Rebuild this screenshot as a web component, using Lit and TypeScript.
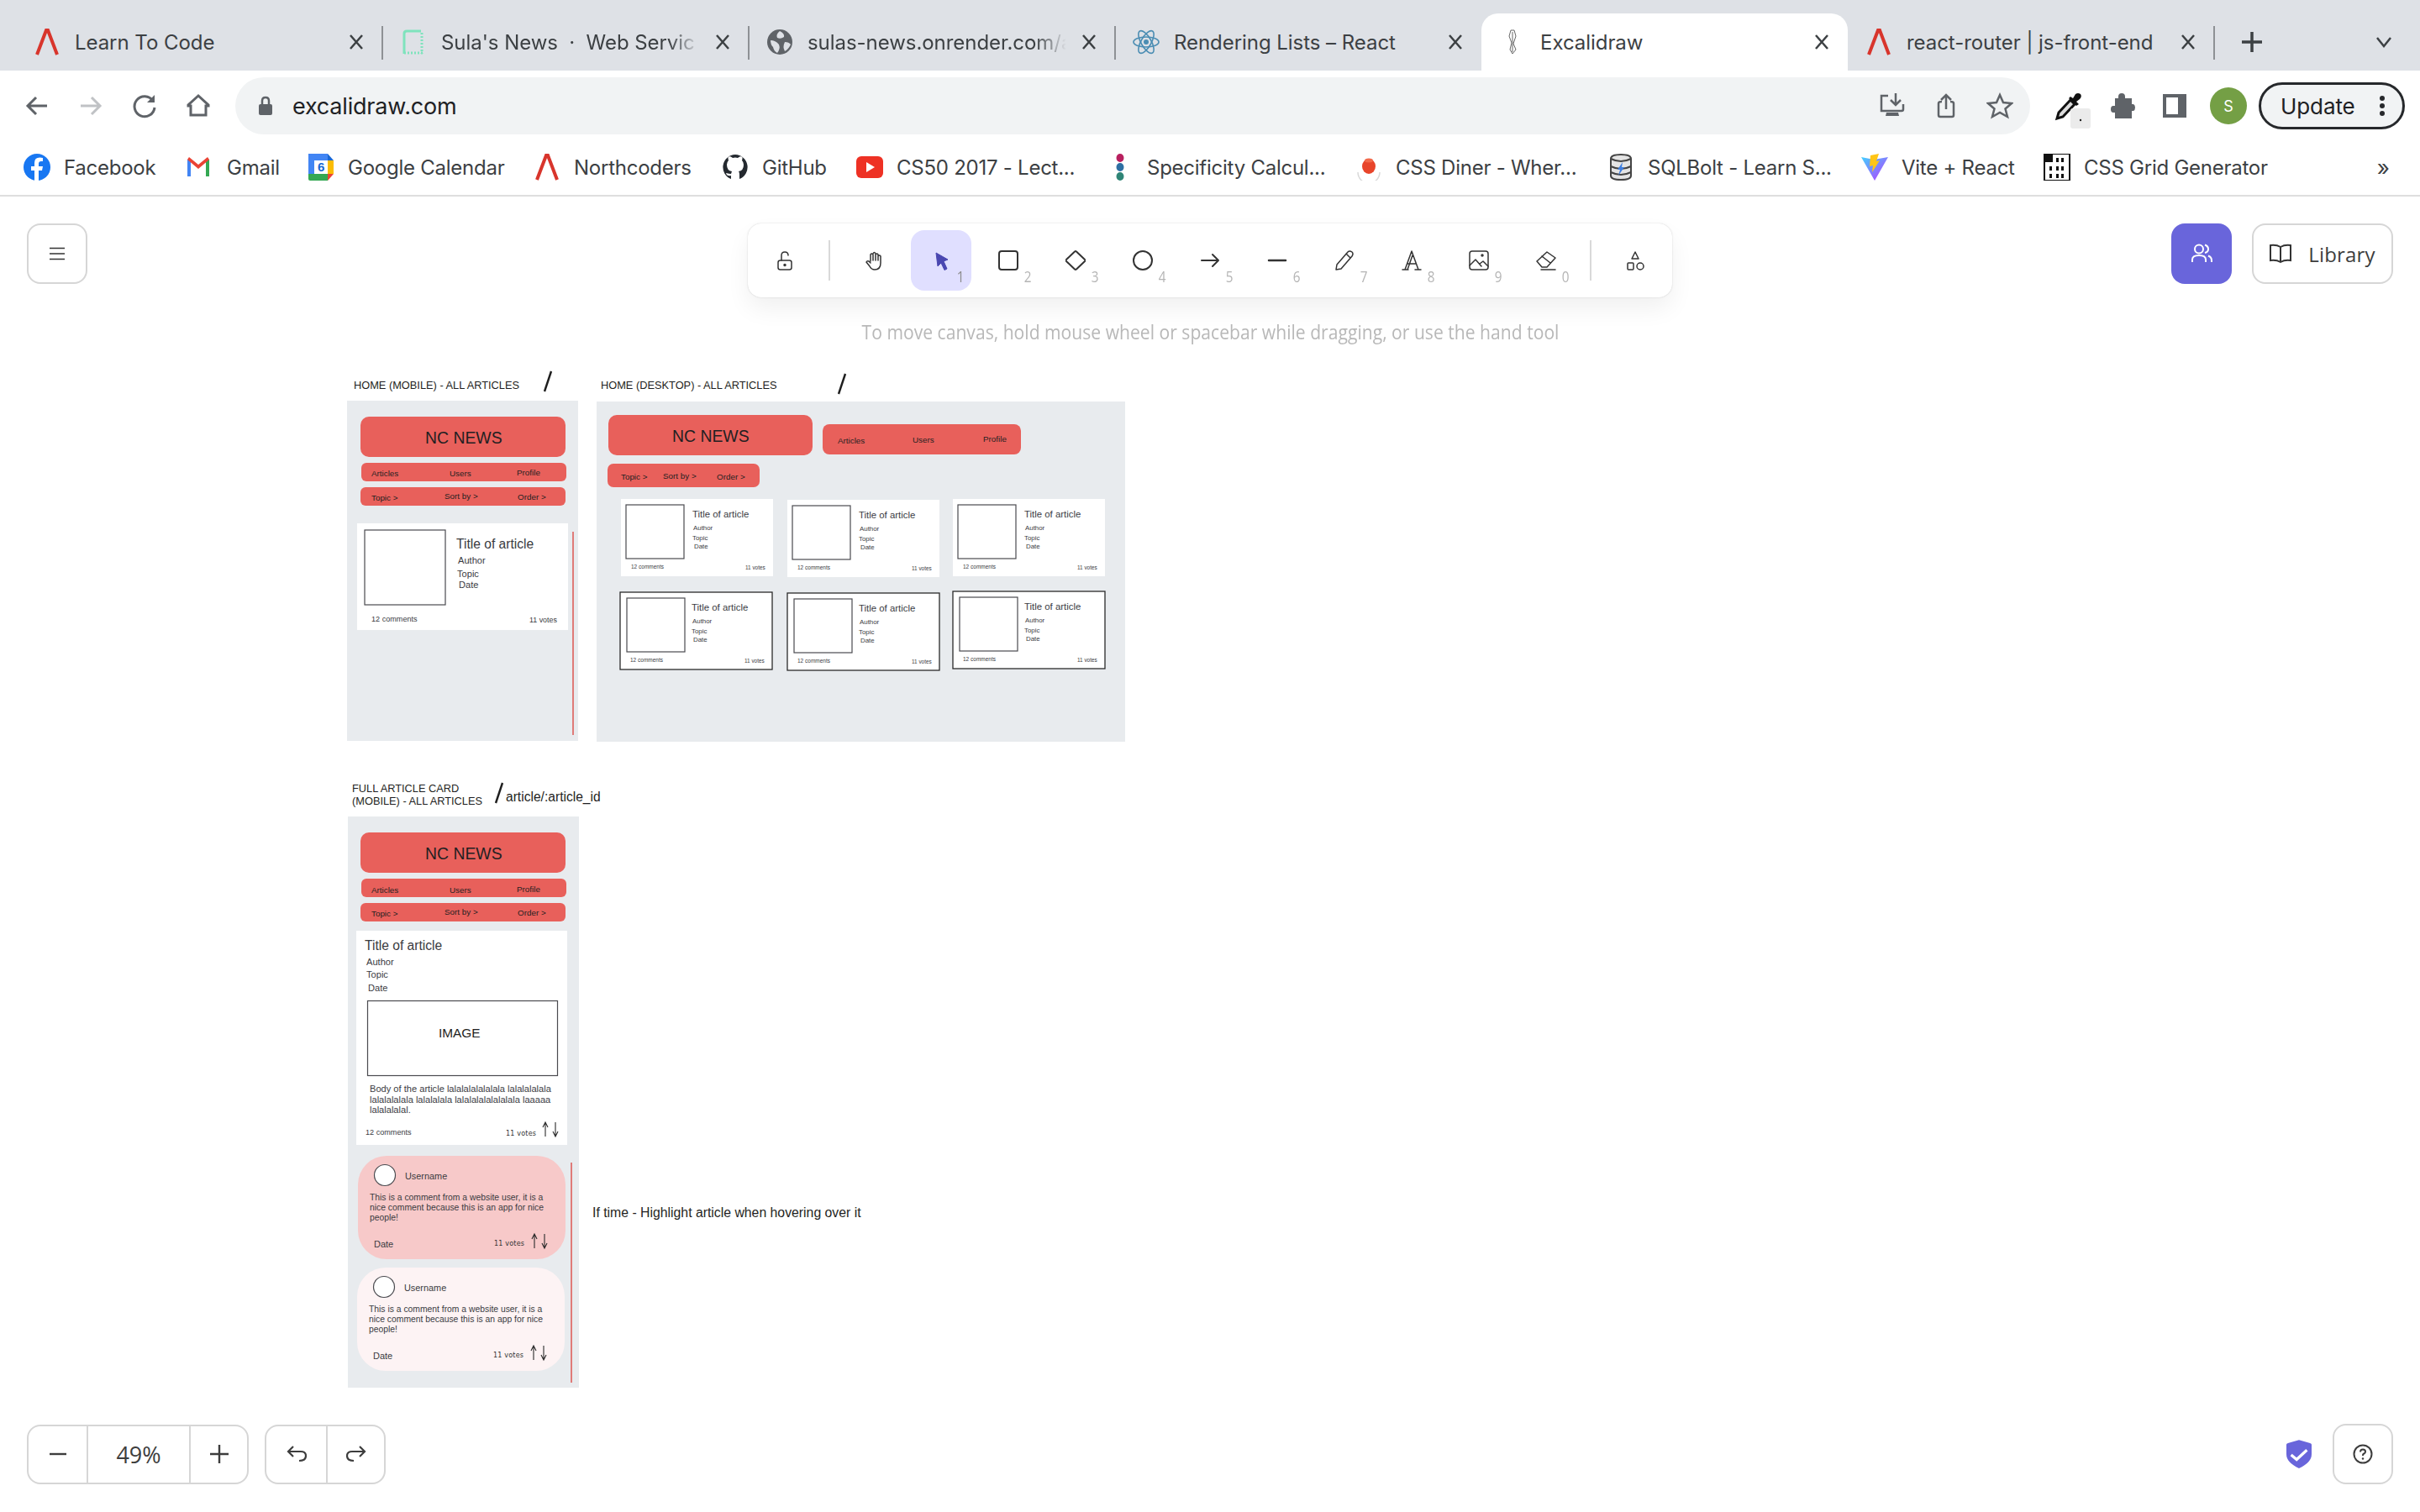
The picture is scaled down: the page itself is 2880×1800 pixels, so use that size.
import { LitElement, html, svg, css } from "lit";
import { customElement } from "lit/decorators.js";

const lambda = (w = 4) => svg`<path d="M4 31 L15 2 H17 L28 31" fill="none" stroke="#d8352c" stroke-width="${w}"/>`;

const icon = (body: unknown, size = 32, vb = 32) =>
  html`<svg class="ic" width="${size}" height="${size}" viewBox="0 0 ${vb} ${vb}">${body}</svg>`;

const favicons: Record<string, unknown> = {
  nc: lambda(),
  render: svg`<path d="M5 30 V6 Q5 3 8 3 H25" fill="none" stroke="#7fe3bd" stroke-width="3"/><path d="M26 5 V30 M5 29 H28" fill="none" stroke="#7fe3bd" stroke-width="3" stroke-dasharray="2 2"/>`,
  globe: svg`<circle cx="16" cy="16" r="15" fill="#5f6368"/><path d="M16 3 Q22 6 21 10 Q17 13 13 11 Q11 7 16 3 Z M5 14 Q11 14 15 19 Q17 24 13 29 Q9 27 8 22 Q5 19 5 14 Z M22 16 Q27 16 29 19 Q26 25 22 27 Q19 22 22 16Z" fill="#dee1e6"/>`,
  react: svg`<g fill="none" stroke="#4b8db3" stroke-width="1.6"><ellipse cx="16" cy="16" rx="15" ry="6"/><ellipse cx="16" cy="16" rx="15" ry="6" transform="rotate(60 16 16)"/><ellipse cx="16" cy="16" rx="15" ry="6" transform="rotate(120 16 16)"/></g><circle cx="16" cy="16" r="3" fill="#4b8db3"/>`,
  clip: svg`<path d="M14 2 L18 2 L20 9 L17 18 L20 25 L16 30 L13 25 L15 17 L12 9 Z M16 4 V28" fill="none" stroke="#666" stroke-width="1"/>`,
  fb: svg`<circle cx="16" cy="16" r="16" fill="#1877f2"/><path d="M18 32 V20 H22 L23 15 H18 V12 Q18 9 21 9 H23 V5 Q13 3 13 11 V15 H9 V20 H13 V32 Z" fill="#fff"/>`,
  gmail: svg`<g transform="translate(-2 0)"><path d="M3 27 V7 L7 6 V27 Z" fill="#4285f4"/><path d="M25 27 V6 L29 7 V27 Z" fill="#34a853"/><path d="M3 7 L16 18 L29 7 L27 4 L16 13 L5 4 Z" fill="#ea4335"/></g>`,
  cal: svg`<rect x="1" y="0" width="30" height="32" rx="2" fill="#fff"/><path d="M1 0 H24 V8 H8 V24 H1 Z" fill="#4285f4"/><path d="M24 0 L31 8 H24Z" fill="#1967d2"/><path d="M24 8 H31 V24 H24 Z" fill="#fbbc04"/><path d="M1 24 H24 V32 H3 Q1 32 1 30 Z" fill="#34a853"/><path d="M24 24 H31 L24 32 Z" fill="#ea4335"/><text x="16" y="21" class="cal6">6</text>`,
  gh: svg`<path d="M16 1 A15 15 0 0 0 11 30 V26 Q6 27 5 23 Q9 24 11 24 L12 21 Q6 20 6 13 Q6 10 8 8 Q7 5 8 3 Q11 3 13 5 Q16 4 19 5 Q21 3 24 3 Q25 5 24 8 Q26 10 26 13 Q26 20 20 21 Q21 22 21 25 V30 A15 15 0 0 0 16 1Z" fill="#24292f"/>`,
  yt: svg`<rect x="0" y="3" width="32" height="26" rx="6" fill="#ee3124"/><path d="M12 10 L22 16 L12 22Z" fill="#fff"/>`,
  spec: svg`<ellipse cx="16" cy="5" rx="4.500" ry="5" fill="#b8205f"/><ellipse cx="16" cy="16" rx="4.500" ry="5" fill="#2d6fa3"/><ellipse cx="16" cy="27" rx="4.500" ry="5" fill="#2f8576"/>`,
  diner: svg`<path d="M3 22 A13 13 0 0 0 29 22" fill="none" stroke="#d9d9d9" stroke-width="1.500"/><ellipse cx="16" cy="15" rx="8" ry="9" fill="#e8452a"/><ellipse cx="16" cy="8" rx="5" ry="2.500" fill="#f26a4b"/>`,
  sql: svg`<path d="M4 6 Q4 1 16 1 Q28 1 28 6 V26 Q28 31 16 31 Q4 31 4 26 Z" fill="#e4e4e4" stroke="#444" stroke-width="2"/><path d="M4 6 Q16 12 28 6 M4 15 Q16 21 28 15 M4 22 Q16 28 28 22" fill="none" stroke="#444" stroke-width="2"/><path d="M18 10 L12 19 H15 L13 26 L20 16 H17 Z" fill="#3f7fe0"/>`,
  vite: svg`<defs><linearGradient id="vg" x1="0" y1="0" x2="1" y2="1"><stop offset="0" stop-color="#41d1ff"/><stop offset="1" stop-color="#bd34fe"/></linearGradient></defs><path d="M0 4 L15 7 L32 4 L16 32 Z" fill="url(#vg)"/><path d="M21 0 L11 2 L10 15 L14 14 L13 22 L22 8 L18 9 Z" fill="#ffc517"/>`,
  grid: svg`<rect x="1" y="0" width="30" height="32" fill="#fff" stroke="#111" stroke-width="2"/><rect x="1" y="0" width="10" height="10" fill="#111"/><path d="M15 5 H18 V10 H15Z M21 5 H24 V10 H21Z M7 15 H10 V20 H7Z M15 15 H18 V20 H15Z M21 15 H24 V20 H21Z M7 24 H10 V29 H7Z M15 24 H18 V29 H15Z M21 24 H24 V29 H21Z" fill="#111"/>`,
};

const tabs = [
  { t: "Learn To Code", f: "nc", fade: false },
  { t: "Sula's News \u00a0·\u00a0 Web Servic", f: "render", fade: true },
  { t: "sulas-news.onrender.com/a", f: "globe", fade: true },
  { t: "Rendering Lists – React", f: "react", fade: false },
  { t: "Excalidraw", f: "clip", fade: false, active: true },
  { t: "react-router | js-front-end", f: "nc", fade: false },
];

const bookmarks = [
  { t: "Facebook", f: "fb", w: 194 },
  { t: "Gmail", f: "gmail", w: 144 },
  { t: "Google Calendar", f: "cal", w: 269 },
  { t: "Northcoders", f: "nc", w: 224 },
  { t: "GitHub", f: "gh", w: 160 },
  { t: "CS50 2017 - Lect...", f: "yt", w: 298 },
  { t: "Specificity Calcul...", f: "spec", w: 296 },
  { t: "CSS Diner - Wher...", f: "diner", w: 300 },
  { t: "SQLBolt - Learn S...", f: "sql", w: 302 },
  { t: "Vite + React", f: "vite", w: 217 },
  { t: "CSS Grid Generator", f: "grid", w: 320 },
];

const stroke = (d: unknown, w = 2) =>
  svg`<g fill="none" stroke="#333" stroke-width="${w}" stroke-linecap="round" stroke-linejoin="round">${d}</g>`;

const tools: { k: string; n?: string; body: unknown; active?: boolean; sep?: boolean }[] = [
  { k: "lock", body: stroke(svg`<rect x="4" y="12" width="16" height="11" rx="2.500"/><path d="M8 12 V6 Q8 2 12 2 Q16 2 16 6"/><circle cx="12" cy="17.500" r="1"/>`, 1.5), sep: true },
  { k: "hand", body: stroke(svg`<path d="M8 13 V5 Q9.500 3 11 5 V12 M11 4 Q12.500 1 14 4 V12 M14 5 Q15.500 3 17 5 V12 M17 7 Q18.500 5 20 7 V15 Q20 23 13 23 Q9 23 7 19 L3 14 Q4 12 6 13 L8 15"/>`, 1.5) },
  { k: "select", n: "1", active: true, body: svg`<path d="M6 3 L20 11 L15 13 L19 22 L16 23.500 L12 15 L8 19 Z" fill="#4a47b1" stroke="#4a47b1" stroke-width="1"/>` },
  { k: "rect", n: "2", body: stroke(svg`<rect x="1" y="1" width="22" height="22" rx="3"/>`) },
  { k: "diamond", n: "3", body: stroke(svg`<path d="M11 1.500 Q12 .5 13 1.500 L23 11 Q24 12 23 13 L13 22.500 Q12 23.500 11 22.500 L1 13 Q0 12 1 11 Z"/>`) },
  { k: "circle", n: "4", body: stroke(svg`<circle cx="12" cy="12" r="11"/>`) },
  { k: "arrow", n: "5", body: stroke(svg`<path d="M2 12 H22 M15 5 L22 12 L15 19"/>`) },
  { k: "line", n: "6", body: stroke(svg`<path d="M2 12 H22"/>`, 2.5) },
  { k: "pencil", n: "7", body: stroke(svg`<path d="M3 17 L16 2 Q18 0 21 2 Q23 4 21 7 L8 22 L2 23 Z M14 4 L19 9"/>`, 1.5) },
  { k: "text", n: "8", body: stroke(svg`<path d="M1 23 H8 M16 23 H23 M4 23 L12 1 L20 23 M7 23 L13 6 M7 16 H17"/>`, 1.5) },
  { k: "image", n: "9", body: stroke(svg`<rect x="1" y="1" width="22" height="22" rx="3"/><path d="M1 18 L8 11 L15 19 M13 16 L17 13 L23 19"/><circle cx="16" cy="6" r="1"/>`, 1.5) },
  { k: "eraser", n: "0", body: stroke(svg`<path d="M7 20 L1 13 L13 2 L23 9 L13 20 Z M7 7 L17 15 M6 23 H23"/>`, 1.5), sep: true },
  { k: "shapes", body: stroke(svg`<path d="M12 2 L16 10 H8 Z"/><rect x="3" y="15" width="7" height="8" rx="1"/><circle cx="18" cy="19" r="4"/>`, 1.5) },
];

/* ---- drawing on the free canvas; coordinates are page-y minus the chrome height ---- */
const Y0 = 234;
const t = (x: number, y: number, s: string, size: number, cls = "") =>
  svg`<text x="${x}" y="${y - Y0}" font-size="${size}" class="${cls}">${s}</text>`;
const rect = (x: number, y: number, w: number, h: number, cls: string, r = 0) =>
  svg`<rect x="${x}" y="${y - Y0}" width="${w}" height="${h}" rx="${r}" class="${cls}"/>`;
const slash = (x: number, y: number) =>
  svg`<path d="M${x + 9} ${y - Y0} L${x + 1} ${y + 24 - Y0}" class="slash"/>`;
const arrows = (x: number, y: number) => svg`
  <path d="M${x} ${y + 17 - Y0} V${y - Y0} M${x - 3} ${y + 6 - Y0} L${x} ${y - Y0} L${x + 3} ${y + 6 - Y0}" class="arr"/>
  <path d="M${x + 12} ${y - Y0} V${y + 17 - Y0} M${x + 9} ${y + 11 - Y0} L${x + 12} ${y + 17 - Y0} L${x + 15} ${y + 11 - Y0}" class="arr"/>`;

const mobileHeader = (x: number, y: number, a: number) => svg`
  ${rect(x + 16, y + 19, 244, 48, "red", 10)}
  ${t(x + 93, y + 51, "NC NEWS", 19.4, "ink")}
  ${rect(x + 17, y + 74, 244, 22, "red", 6)}
  ${t(x + 29, y + 90 + a, "Articles", 9.85, "ink")}
  ${t(x + 122, y + 90 + a, "Users", 9.85, "ink")}
  ${t(x + 202, y + 89 + a, "Profile", 9.85, "ink")}
  ${rect(x + 16, y + 103, 244, 22, "red", 6)}
  ${t(x + 29, y + 119, "Topic >", 9.85, "ink")}
  ${t(x + 116, y + 117, "Sort by >", 9.85, "ink")}
  ${t(x + 203, y + 118, "Order >", 9.85, "ink")}`;

const smallCard = (x: number, y: number, b: boolean) => svg`
  ${rect(x, y, 181, 92, b ? "card outlined" : "card")}
  ${rect(x + (b ? 8 : 6), y + 7, 69, 64, "pic")}
  ${t(x + 85, y + 22, "Title of article", 11.4, "ink2")}
  ${t(x + 86, y + 37, "Author", 7.9, "ink2")}
  ${t(x + 85, y + 49, "Topic", 7.9, "ink2")}
  ${t(x + 87, y + 59, "Date", 7.9, "ink2")}
  ${t(x + 12, y + 83, "12 comments", 6.5, "ink2")}
  ${t(x + 148, y + 84, "11 votes", 6.4, "ink2")}`;

const comment = (x: number, y: number, fill: string) => svg`
  ${rect(x, y, 247, 123, fill, 34)}
  <circle cx="${x + 32}" cy="${y + 23 - Y0}" r="12.500" class="pic"/>
  ${t(x + 56, y + 28, "Username", 10.9, "ink2")}
  ${t(x + 14, y + 53, "This is a comment from a website user, it is a", 10.35, "ink2")}
  ${t(x + 14, y + 65, "nice comment because this is an app for nice", 10.35, "ink2")}
  ${t(x + 14, y + 77, "people!", 10.35, "ink2")}
  ${t(x + 19, y + 109, "Date", 11, "ink2")}
  ${t(x + 162, y + 107, "11 votes", 8, "hand")}
  ${arrows(x + 210, y + 93)}`;

const drawing = svg`
  <!-- home, mobile -->
  ${t(421, 463, "HOME (MOBILE) - ALL ARTICLES", 12.8, "ink")}
  ${slash(647, 442)}
  ${rect(413, 477, 275, 405, "frame")}
  ${mobileHeader(413, 477, 0)}
  ${rect(425, 623, 251, 127, "card")}
  ${rect(434, 631, 96, 89, "pic")}
  ${t(543, 653, "Title of article", 15.6, "ink2")}
  ${t(545, 671, "Author", 11.1, "ink2")}
  ${t(544, 687, "Topic", 11.1, "ink2")}
  ${t(546, 700, "Date", 11.1, "ink2")}
  ${t(442, 740, "12 comments", 9.1, "ink2")}
  ${t(630, 741, "11 votes", 8.9, "ink2")}
  <path d="M682 ${633 - Y0} V${875 - Y0}" class="rule"/>

  <!-- home, desktop -->
  ${t(715, 463, "HOME (DESKTOP) - ALL ARTICLES", 12.8, "ink")}
  ${slash(997, 445)}
  ${rect(710, 478, 629, 405, "frame")}
  ${rect(724, 494, 243, 48, "red", 10)}
  ${t(800, 526, "NC NEWS", 19.4, "ink")}
  ${rect(979, 505, 236, 36, "red", 8)}
  ${t(997, 528, "Articles", 9.85, "ink")}
  ${t(1086, 527, "Users", 9.85, "ink")}
  ${t(1170, 526, "Profile", 9.85, "ink")}
  ${rect(723, 552, 181, 28, "red", 7)}
  ${t(739, 571, "Topic >", 9.85, "ink")}
  ${t(789, 570, "Sort by >", 9.85, "ink")}
  ${t(853, 571, "Order >", 9.85, "ink")}
  ${smallCard(739, 594, false)}
  ${smallCard(937, 595, false)}
  ${smallCard(1134, 594, false)}
  ${smallCard(738, 705, true)}
  ${smallCard(937, 706, true)}
  ${smallCard(1134, 704, true)}

  <!-- full article, mobile -->
  ${t(419, 943, "FULL ARTICLE CARD", 12.8, "ink")}
  ${t(419, 958, "(MOBILE) - ALL ARTICLES", 12.8, "ink")}
  ${slash(589, 932)}
  ${t(602, 954, "article/:article_id", 15.6, "ink")}
  ${rect(414, 972, 275, 680, "frame")}
  ${mobileHeader(413, 972, 1)}
  ${rect(424, 1108, 251, 255, "card")}
  ${t(434, 1131, "Title of article", 15.6, "ink2")}
  ${t(436, 1149, "Author", 11.1, "ink2")}
  ${t(436, 1164, "Topic", 11.1, "ink2")}
  ${t(438, 1180, "Date", 11.1, "ink2")}
  ${rect(437.5, 1191.5, 226, 89, "pic")}
  ${t(522, 1235, "IMAGE", 15.4, "ink")}
  ${t(440, 1300, "Body of the article lalalalalalalala lalalalalala", 11.1, "ink2")}
  ${t(440, 1313, "lalalalalala lalalalala lalalalalalalalala laaaaa", 11.1, "ink2")}
  ${t(440, 1325, "lalalalalal.", 11.1, "ink2")}
  ${t(435, 1351, "12 comments", 9.1, "ink2")}
  ${t(602, 1352, "11 votes", 8, "hand")}
  ${arrows(649, 1336)}
  ${comment(426, 1376, "pink")}
  ${comment(425, 1509, "blush")}
  <path d="M680 ${1384 - Y0} V${1646 - Y0}" class="rule"/>
  ${t(705, 1449, "If time - Highlight article when hovering over it", 15.8, "ink")}
`;

@customElement("app-root")
export class AppRoot extends LitElement {
  static styles = css`
    :host { display: flex; flex-direction: column; width: 2880px; height: 1800px; background: #fff; overflow: hidden;
      font-family: Inter, "Liberation Sans", Arial, sans-serif; color: #3c4043; }
    .ic { display: block; flex: none; }
    .cal6 { font: bold 15px "Liberation Sans", sans-serif; fill: #1967d2; text-anchor: middle; }

    /* tab strip */
    .tabs { display: flex; align-items: flex-end; height: 84px; padding-left: 19px; background: #dee1e6; flex: none; }
    .tab { position: relative; display: flex; align-items: center; width: 436px; height: 68px; box-sizing: border-box;
      padding: 0 21px 0 21px; gap: 17px; font-size: 24px; letter-spacing: -.05px; }
    .tab.sep::after { content: ""; position: absolute; right: -1px; top: 15px; width: 2px; height: 40px; background: #8e9195; }
    .tab.active { background: #fff; border-radius: 20px 20px 0 0; }
    .tab-t { flex: 1; white-space: nowrap; overflow: hidden; }
    .tab-t.fade { -webkit-mask-image: linear-gradient(90deg, #000 88%, transparent 100%); mask-image: linear-gradient(90deg, #000 88%, transparent 100%); }
    .x { flex: none; width: 20px; height: 20px; }
    .x path { stroke: #3c4043; stroke-width: 2.500; fill: none; }
    .strip-end { flex: 1; display: flex; align-items: center; height: 68px; padding: 0 33px 0 31px; justify-content: space-between; }

    /* address row */
    .bar { display: flex; align-items: center; height: 84px; flex: none; padding-left: 28px; box-sizing: border-box; }
    .nav { display: flex; gap: 32px; margin-right: 28px; }
    .omni { display: flex; align-items: center; flex: none; width: 2136px; height: 68px; border-radius: 34px; background: #f1f3f4;
      box-sizing: border-box; padding: 0 20px 0 27px; gap: 23px; font-size: 27px; letter-spacing: -.2px; color: #202124; }
    .omni-t { flex: 1; }
    .omni-icons { display: flex; gap: 32px; }
    .ext { display: flex; align-items: center; gap: 31px; margin-left: 30px; }
    .picker { overflow: visible; }
    .avatar { width: 44px; height: 44px; border-radius: 50%; background: #749f45; color: #fff; font-size: 18px;
      display: flex; align-items: center; justify-content: center; flex: none; margin-left: -5px; }
    .update { display: flex; align-items: center; justify-content: space-between; width: 174px; height: 56px; box-sizing: border-box;
      border: 3px solid #26282b; border-radius: 28px; background: #f1f3f4; padding: 0 20px 0 23px; font-size: 26px; letter-spacing: -.1px; color: #202124; margin-left: -17px; }

    /* bookmarks */
    .marks { display: flex; align-items: center; height: 66px; flex: none; padding: 0 28px 2px; box-sizing: border-box; border-bottom: 2px solid #dedede; }
    .mark { display: flex; align-items: center; gap: 16px; font-size: 24px; letter-spacing: -.25px; white-space: nowrap; flex: none; }
    .more { margin-left: auto; font-size: 26px; margin-right: 8px; }

    /* excalidraw */
    main { position: relative; flex: 1; }
    .canvas { position: absolute; inset: 0; display: block; font-family: "Liberation Sans", Arial, sans-serif; }
    .frame { fill: #e8ebee; }
    .red { fill: #e8605b; }
    .card { fill: #fff; }
    .outlined { stroke: #2a2a2a; stroke-width: 1.3; }
    .pic { fill: #fff; stroke: #4a4a4f; stroke-width: 1.2; }
    .pink { fill: #f7c9c9; }
    .blush { fill: #fdf3f4; }
    .ink { fill: #1f1f22; }
    .ink2 { fill: #3a3b3f; }
    .hand { fill: #333; font-family: "DejaVu Sans", sans-serif; letter-spacing: .2px; }
    .slash { stroke: #1e1e1e; stroke-width: 2.4; fill: none; }
    .arr { stroke: #2a2a2a; stroke-width: 1.1; fill: none; }
    .rule { stroke: #dd5f5b; stroke-width: 1.6; fill: none; }

    .ui { position: absolute; inset: 0; display: flex; flex-direction: column; justify-content: space-between; padding: 32px 32px 33px; box-sizing: border-box; }
    .top { display: flex; justify-content: space-between; align-items: flex-start; }
    .mid { display: flex; flex-direction: column; align-items: center; }
    .side { display: flex; gap: 24px; width: 264px; justify-content: flex-end; }
    .side.l { justify-content: flex-start; }
    .btn { display: flex; align-items: center; justify-content: center; width: 72px; height: 72px; box-sizing: border-box;
      border: 2px solid #d6d6d6; border-radius: 16px; background: #fff; flex: none; }
    .collab { background: #6965db; border: 0; }
    .lib { width: 168px; gap: 20px; font: 24px "Open Sans", sans-serif; letter-spacing: .2px; color: #3d3d3d; }
    .toolbar { display: flex; align-items: center; gap: 8px; width: 1100px; height: 88px; box-sizing: border-box; padding: 0 8px;
      background: #fff; border-radius: 16px; box-shadow: 0 0 1px rgba(0,0,0,.17), 0 0 3px rgba(0,0,0,.08), 0 14px 28px rgba(0,0,0,.06); }
    .tool { position: relative; display: flex; align-items: center; justify-content: center; width: 72px; height: 72px; border-radius: 16px; flex: none; }
    .tool.active { background: #e0dfff; }
    .key { position: absolute; right: 8px; bottom: 5px; font: 18px "Open Sans", sans-serif; transform: scaleX(.85); color: #b5b5b5; }
    .tool.active .key { color: #8a8a8a; }
    .div { width: 2px; height: 48px; background: #d9d9d9; margin: 0 8px; flex: none; }
    .hint { margin-top: 24px; font: 24px "Open Sans", sans-serif; color: #b8b8b8; transform: scaleX(.88); white-space: nowrap; }
    .bottom { display: flex; align-items: center; }
    .group { display: flex; height: 71px; box-sizing: border-box; border: 2px solid #d6d6d6; border-radius: 16px; background: #fff; flex: none; }
    .cell { display: flex; align-items: center; justify-content: center; box-sizing: border-box; width: 69px; font: 27px "Open Sans", sans-serif; color: #3d3d3d; }
    .cell + .cell { border-left: 2px solid #d6d6d6; }
    .cell.pct { width: 122px; }
    .cell.u { width: 71px; }
    .cell.v { width: 69px; }
    .history { margin-left: 19px; }
    .shield { margin-left: auto; margin-right: 25px; }
  `;

  private tabX = html`<svg class="x" viewBox="0 0 20 20"><path d="M3 2 L17 18 M17 2 L3 18"/></svg>`;

  render() {
    return html`
      <div class="tabs">
        ${tabs.map((tb, i) => html`
          <div class="tab ${tb.active ? "active" : ""} ${(!tb.active && tabs[i + 1] && !tabs[i + 1].active) || i === 5 ? "sep" : ""}">
            ${icon(favicons[tb.f])}
            <span class="tab-t ${tb.fade ? "fade" : ""}">${tb.t}</span>
            ${this.tabX}
          </div>`)}
        <div class="strip-end">
          <svg class="ic" width="28" height="28" viewBox="0 0 28 28"><path d="M14 2 V26 M2 14 H26" stroke="#3c4043" stroke-width="3.500"/></svg>
          <svg class="ic" width="20" height="14" viewBox="0 0 20 14"><path d="M2 2 L10 12 L18 2" fill="none" stroke="#3c4043" stroke-width="2.500"/></svg>
        </div>
      </div>

      <div class="bar">
        <div class="nav">
          ${icon(svg`<path d="M28 16 H6 M15 6 L5 16 L15 26" fill="none" stroke="#5f6368" stroke-width="3"/>`)}
          ${icon(svg`<path d="M4 16 H26 M17 6 L27 16 L17 26" fill="none" stroke="#c0c2c5" stroke-width="3"/>`)}
          ${icon(svg`<path d="M26 10 A12 12 0 1 0 28 18" fill="none" stroke="#5f6368" stroke-width="3"/><path d="M28 3 V12 H19 Z" fill="#5f6368"/>`)}
          ${icon(svg`<path d="M16 4 L4 15 V16 H7 V27 H25 V16 H28 V15 Z" fill="none" stroke="#5f6368" stroke-width="3"/>`)}
        </div>
        <div class="omni">
          <svg class="ic" width="18" height="24" viewBox="0 0 18 24"><rect x="1" y="10" width="16" height="13" rx="2" fill="#5f6368"/><path d="M5 10 V6 Q5 2 9 2 Q13 2 13 6 V10" fill="none" stroke="#5f6368" stroke-width="2.500"/></svg>
          <span class="omni-t">excalidraw.com</span>
          <div class="omni-icons">
            ${icon(svg`<path d="M11 4 H3 V22 H27 Q29 22 29 20 V14" fill="none" stroke="#5f6368" stroke-width="2.500"/><path d="M20 1 V14 M14 9 L20 15 L26 9" fill="none" stroke="#5f6368" stroke-width="2.500"/><path d="M9 24 H23 L24 28 H8 Z" fill="#5f6368"/>`)}
            ${icon(svg`<path d="M11 11 Q7 11 7 13 V27 Q7 29 9 29 H23 Q25 29 25 27 V13 Q25 11 21 11 M16 20 V3 M10 9 L16 3 L22 9" fill="none" stroke="#5f6368" stroke-width="2.500"/>`)}
            ${icon(svg`<path d="M16 3 L20 12 L30 13 L22.500 19.500 L25 29 L16 24 L7 29 L9.500 19.500 L2 13 L12 12 Z" fill="none" stroke="#5f6368" stroke-width="2.500"/>`)}
          </div>
        </div>
        <div class="ext">
          <svg class="ic picker" width="32" height="32" viewBox="0 0 32 32">
            <path d="M21 7 L24 2 Q27 0 30 2 Q32 5 29 8 L25 11 L28 14 L25 16 L16 7 L18 5 Z" fill="#111"/>
            <path d="M18 9 L4 24 L2 31 L9 29 L23 14 Z" fill="#ddd" stroke="#111" stroke-width="3"/>
            <rect x="18" y="19" width="24" height="24" rx="3" fill="#ebebeb"/>
            <circle cx="30" cy="33" r="1.200" fill="#222"/>
          </svg>
          ${icon(svg`<path d="M12 5 Q12 1 16 1 Q20 1 20 5 V7 H28 V14 H30 Q32 15 32 18 Q32 21 30 22 H28 V31 H8 V24 H6 Q3 24 3 20 Q3 16 6 16 H8 V7 H12 Z" fill="#5f6368"/>`)}
          ${icon(svg`<rect x="2" y="2" width="28" height="28" fill="#5f6368"/><rect x="6" y="6" width="14" height="20" fill="#fff"/>`)}
          <div class="avatar">S</div>
          <div class="update"><span>Update</span>
            <svg class="ic" width="8" height="24" viewBox="0 0 8 24"><circle cx="4" cy="3" r="3" fill="#26282b"/><circle cx="4" cy="12" r="3" fill="#26282b"/><circle cx="4" cy="21" r="3" fill="#26282b"/></svg>
          </div>
        </div>
      </div>

      <div class="marks">
        ${bookmarks.map(b => html`<div class="mark" style="width:${b.w}px">${icon(favicons[b.f])}<span>${b.t}</span></div>`)}
        <span class="more">»</span>
      </div>

      <main>
        <svg class="canvas" width="2880" height="1566" viewBox="0 0 2880 1566">${drawing}</svg>
        <div class="ui">
          <div class="top">
            <div class="side l">
              <div class="btn">
                <svg class="ic" width="24" height="24" viewBox="0 0 24 24"><path d="M3 5.500 H21 M3 12 H21 M3 18.500 H21" stroke="#333" stroke-width="1.600" fill="none"/></svg>
              </div>
            </div>
            <div class="mid">
              <div class="toolbar">
                ${tools.map(tl => html`
                  <div class="tool ${tl.active ? "active" : ""}">
                    ${icon(tl.body, 24, 24)}
                    ${tl.n ? html`<span class="key">${tl.n}</span>` : ""}
                  </div>
                  ${tl.sep ? html`<div class="div"></div>` : ""}`)}
              </div>
              <div class="hint">To move canvas, hold mouse wheel or spacebar while dragging, or use the hand tool</div>
            </div>
            <div class="side">
              <div class="btn collab">
                <svg class="ic" width="26" height="26" viewBox="0 0 26 26"><g fill="none" stroke="#fff" stroke-width="2"><circle cx="10" cy="7.500" r="5"/><path d="M2 23 V20 Q2 15 10 15 Q18 15 18 20 V23 M17 2.500 Q21 4 21 7.500 Q21 11 17 12 M21 15.500 Q25 17 25 21 V23"/></g></svg>
              </div>
              <div class="btn lib">
                <svg class="ic" width="26" height="24" viewBox="0 0 26 24"><path d="M13 4 Q8 1 1 2 V20 Q8 19 13 22 Q18 19 25 20 V2 Q18 1 13 4 Z M13 4 V22" fill="none" stroke="#333" stroke-width="2"/></svg>
                <span>Library</span>
              </div>
            </div>
          </div>
          <div class="bottom">
            <div class="group">
              <div class="cell"><svg class="ic" width="20" height="4" viewBox="0 0 20 4"><path d="M0 2 H20" stroke="#3d3d3d" stroke-width="2.400"/></svg></div>
              <div class="cell pct">49%</div>
              <div class="cell"><svg class="ic" width="22" height="22" viewBox="0 0 22 22"><path d="M0 11 H22 M11 0 V22" stroke="#3d3d3d" stroke-width="2.400"/></svg></div>
            </div>
            <div class="group history">
              <div class="cell u"><svg class="ic" width="24" height="22" viewBox="0 0 24 22"><path d="M8 2 L2 8 L8 14 M2 8 H17 Q23 8 23 13 Q23 19 15 19" fill="none" stroke="#3d3d3d" stroke-width="2.200"/></svg></div>
              <div class="cell v"><svg class="ic" width="24" height="22" viewBox="0 0 24 22"><path d="M16 2 L22 8 L16 14 M22 8 H7 Q1 8 1 13 Q1 19 9 19" fill="none" stroke="#3d3d3d" stroke-width="2.200"/></svg></div>
            </div>
            <svg class="ic shield" width="30" height="34" viewBox="0 0 32 36"><path d="M16 0 L30 4 Q32 4.500 32 6 V18 Q32 29 16 36 Q0 29 0 18 V6 Q0 4.500 2 4 Z" fill="#6965db"/><path d="M6 19 L13 25 L26 13" fill="none" stroke="#fff" stroke-width="3.500"/></svg>
            <div class="btn">
              <svg class="ic" width="24" height="24" viewBox="0 0 24 24"><circle cx="12" cy="12" r="10.500" fill="none" stroke="#3d3d3d" stroke-width="2"/><path d="M9 9.500 Q9 6.500 12 6.500 Q15 6.500 15 9 Q15 11 12.500 12 Q12 12.500 12 14" fill="none" stroke="#3d3d3d" stroke-width="2"/><circle cx="12" cy="17.500" r="1.200" fill="#3d3d3d"/></svg>
            </div>
          </div>
        </div>
      </main>
    `;
  }
}
